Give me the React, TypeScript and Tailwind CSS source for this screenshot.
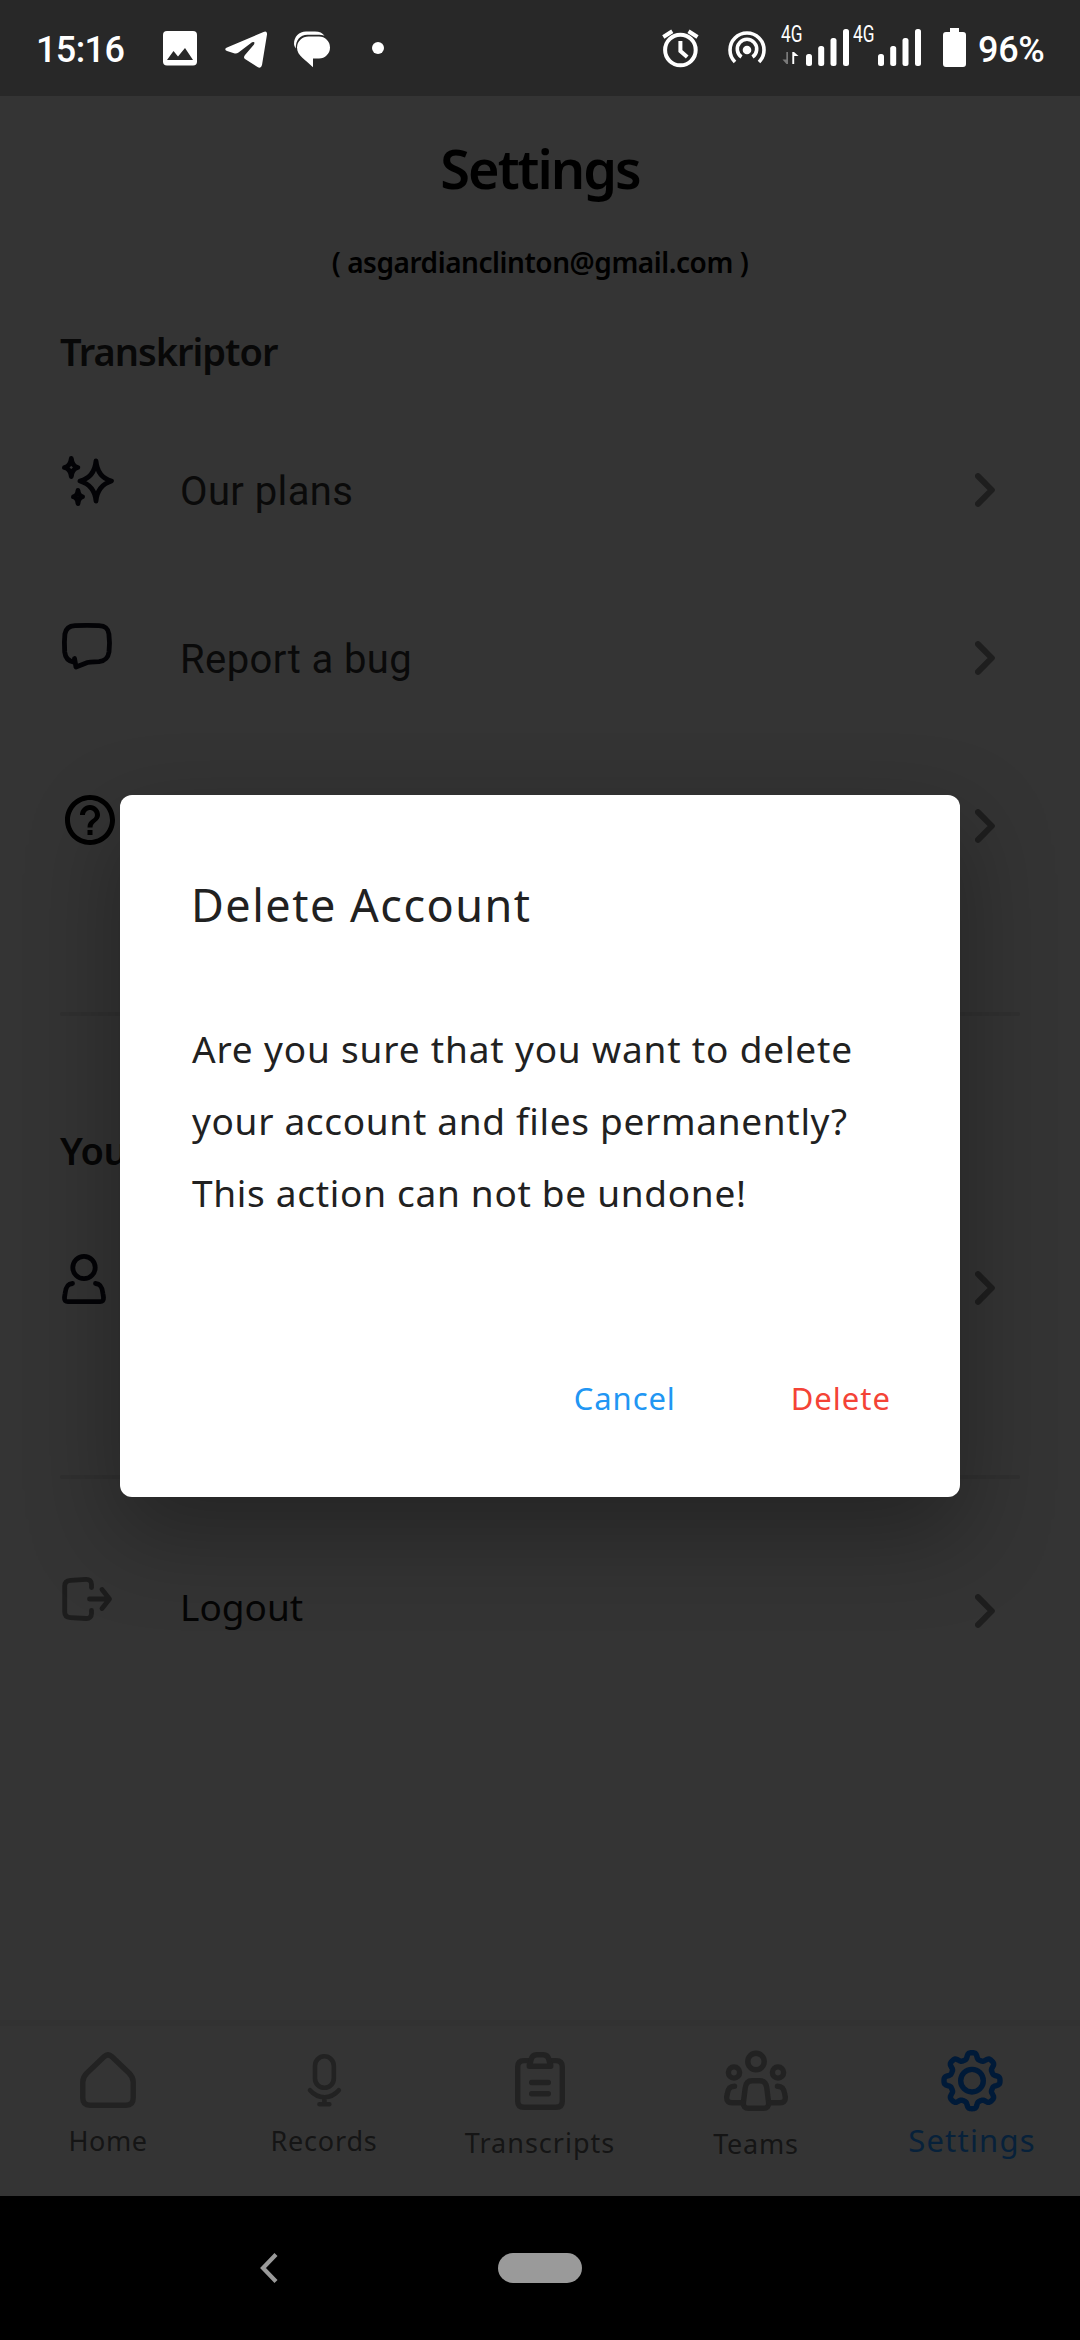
import type { ReactNode } from 'react';

/* ---------- Status bar ---------- */

function Signal() {
  return (
    <svg className="h-24 w-[43px]" viewBox="0 0 43 96" fill="#fff">
      <rect x="0" y="54" width="6" height="12" rx="2.5" />
      <rect x="12.2" y="46" width="6" height="20" rx="2.5" />
      <rect x="24.5" y="38" width="6" height="28" rx="2.5" />
      <rect x="37" y="29" width="6" height="37" rx="2.5" />
    </svg>
  );
}

function StatusBar() {
  return (
    <header className="flex h-24 w-full shrink-0 bg-[#282828] pl-9 font-['Roboto',sans-serif] text-white">
      <div className="w-[127px] text-[36px] font-medium leading-[100px] tracking-[-0.6px]">15:16</div>
      <svg className="h-24 w-[34px]" viewBox="0 0 34 96">
        <rect y="31" width="34" height="34.5" rx="4" fill="#fff" />
        <path d="M4 60L10.5 51L15 56.5L22 48L30 60Z" fill="#282828" />
      </svg>
      <svg className="ml-7 h-24 w-[42px]" viewBox="0 0 42 96" fill="#fff">
        <path d="M2 47.5L38.500 32Q42.300 30.500 42 34.500L37 65Q36 69 32.500 67L20 59Q18 57.500 20 55L29 44.500Q30.500 41 27 42.200L13.500 52.500Q11.500 54 9 53.300L2 51Q-1.500 49 2 47.500Z" />
      </svg>
      <svg className="ml-[27px] h-24 w-9" viewBox="0 0 36 96" fill="#fff">
        <path d="M14.500 36.500H25A11 11 0 0 1 25 58.500H19V67.200C12 60 3 56 3 47.500A11.500 11 0 0 1 14.500 36.500Z" />
        <path d="M0 44C0 36.500 5 31.500 12 31.500H21C25.500 31.500 28.500 33 30.500 35.700C28.500 34.800 26 34.700 24 34.700H13.500C6 34.700 1.600 40 1.800 48.500Q0 46 0 44Z" />
      </svg>
      <svg className="ml-[42px] h-24 w-3" viewBox="0 0 12 96" fill="#fff">
        <circle cx="6" cy="48" r="6" />
      </svg>
      <svg className="ml-[278px] h-24 w-[37px]" viewBox="0 0 37 96" fill="none" stroke="#fff" strokeWidth="4">
        <circle cx="18.400" cy="50" r="15.300" />
        <path d="M1.300 37L10.300 31.200M35.500 37L26.500 31.200" />
        <path d="M18.400 41V51L25.200 57" />
      </svg>
      <svg className="ml-[29px] h-24 w-[38px]" viewBox="0 0 38 96" fill="none" stroke="#fff" strokeWidth="3.600">
        <circle cx="19" cy="50" r="4.300" fill="#fff" stroke="none" />
        <path d="M13.500 57A9.700 9.700 0 1 1 24.500 57" />
        <path d="M7 62A17 17 0 1 1 31 62" />
      </svg>
      <div className="ml-[15px] flex w-6 flex-col pt-6">
        <span className="h-[22px] origin-left scale-x-75 text-[23px] leading-[22px]">4G</span>
        <svg className="mt-[5px] h-[14px] w-5" viewBox="0 0 20 14">
          <path d="M7 1V13H5.500L1.500 8.500H5.300V1Z" fill="#7a7a7a" />
          <path d="M11.300 13V1H13L17.500 5H13.200V13Z" fill="#fff" />
        </svg>
      </div>
      <div className="ml-px flex"><Signal /></div>
      <div className="ml-1 w-[25px] pt-6">
        <span className="block h-[22px] w-8 origin-left scale-x-75 text-[23px] leading-[22px]">4G</span>
      </div>
      <Signal />
      <svg className="ml-[22px] h-24 w-[23px]" viewBox="0 0 23 96" fill="#fff">
        <path d="M7 28H16V32H20Q23 32 23 35V64Q23 67 20 67H3Q0 67 0 64V35Q0 32 3 32H7Z" />
      </svg>
      <div className="ml-[12px] text-[36px] font-medium leading-[100px] tracking-[-0.3px]">96%</div>
    </header>
  );
}

/* ---------- Settings list ---------- */

function RowIcon({ children, color = '#030306' }: { children: ReactNode; color?: string }) {
  return (
    <svg className="h-16 w-16 overflow-visible" viewBox="0 0 64 64" fill="none" stroke={color} strokeWidth="4.800" strokeLinecap="round" strokeLinejoin="round">
      {children}
    </svg>
  );
}

function Row({ icon, children }: { icon: ReactNode; children?: ReactNode }) {
  return (
    <div className="flex h-[168px] items-center pl-[60px] pr-[85px]">
      <div className="w-[120px]">{icon}</div>
      <div className="flex-1">{children}</div>
      <svg className="h-[34px] w-5" viewBox="0 0 20 34" fill="none" stroke="#1e1e1e" strokeWidth="6" strokeLinecap="round" strokeLinejoin="round">
        <path d="M3 3.200L16.800 17L3 30.800" />
      </svg>
    </div>
  );
}

const Sparkles = () => (
  <RowIcon>
    <path d="M36 3C37 13.500 42 20.500 51.500 23C42 26 37 32.500 36 43C35 32.500 30 26 20 23C30 20.500 35 13.500 36 3Z" />
    <path d="M11.300 0.500C11.800 5 13.500 8.500 17.800 9.500C13.500 10.500 11.800 14 11.300 18.500C10.800 14 9 10.500 4.500 9.500C9 8.500 10.800 5 11.300 .500Z" />
    <path d="M18 32.500C18.400 36 19.500 38 22.500 38.800C19.500 39.600 18.400 41.600 18 45.500C17.600 41.600 16.500 39.600 13.500 38.800C16.500 38 17.600 36 18 32.500Z" />
  </RowIcon>
);

const ChatBubble = () => (
  <RowIcon>
    <path d="M14.500 32.500V36.300C8 35.500 5.300 32 4.700 26C4.200 19 4.200 14 4.900 8C5.800 2.500 9 0 15 -.300C22 -.700 32 -.700 39 -.300C45 0 48 2 48.900 8C49.700 14 49.700 20 49 26C48 32.500 45 35 39 35.700C34 36 31 35.600 27.500 36.500L16 41Z" />
  </RowIcon>
);

const Help = () => (
  <RowIcon>
    <path
      transform="translate(0 -4) scale(2.500)"
      fill="#000"
      stroke="none"
      d="M11 18h2v-2h-2v2zm1-16C6.480 2 2 6.480 2 12s4.480 10 10 10 10-4.480 10-10S17.520 2 12 2zm0 18c-4.410 0-8-3.590-8-8s3.590-8 8-8 8 3.590 8 8-3.590 8-8 8zm0-14c-2.210 0-4 1.790-4 4h2c0-1.100.9-2 2-2s2 .9 2 2c0 2-3 1.750-3 5h2c0-2.250 3-2.500 3-5 0-2.210-1.790-4-4-4z"
    />
  </RowIcon>
);

const Person = () => (
  <RowIcon>
    <circle cx="24" cy="11.500" r="11.200" />
    <path d="M12.500 27.500C7 27.800 5.600 32 5 38L4.500 41.500C4.300 44.500 5.500 45.700 8 45.700H40C42.500 45.700 43.700 44.500 43.500 41.500L43 38C42.400 32 41 27.800 35.500 27.500" />
  </RowIcon>
);

const Exit = () => (
  <RowIcon color="#1d1d1d">
    <path d="M31.500 8.500V5.500C31.500 2 29.500 .3 26 .4L10.500 1.300C6.500 1.600 4.700 3.500 4.700 7V33C4.700 36.500 6.500 38.300 10.500 38.600L26 39.500C29.500 39.700 31.500 37.800 31.500 34.500V31.500" />
    <path d="M29.500 20H49.300M42 10.500L49.500 20L42 29.500" />
  </RowIcon>
);

const Divider = () => <div className="mx-[60px] h-1 shrink-0 rounded-full bg-[#303030]" />;

/* ---------- Bottom navigation ---------- */

function NavIcon({ children, color = '#222222' }: { children: ReactNode; color?: string }) {
  return (
    <svg className="h-16 w-16 overflow-visible" viewBox="0 0 64 64" fill="none" stroke={color} strokeWidth="5.400" strokeLinecap="round" strokeLinejoin="round">
      {children}
    </svg>
  );
}

const GEAR = Array.from({ length: 160 }, (_, i) => {
  const a = (i / 160) * Math.PI * 2;
  const r = 24.9 + 3.100 * (Math.tanh(2 * Math.cos(8 * a)) / Math.tanh(2));
  return `${(32 + r * Math.cos(a)).toFixed(2)},${(32.7 + r * Math.sin(a)).toFixed(2)}`;
}).join(' ');

function NavItem({ icon, children }: { icon: ReactNode; children: ReactNode }) {
  return (
    <div className="flex w-[216px] flex-col items-center">
      {icon}
      {children}
    </div>
  );
}

function BottomNav() {
  return (
    <nav className="flex h-[176px] shrink-0 border-t-[6px] border-[#323232] pt-[22px] text-[27px] font-[380] leading-10 text-[#151515]">
      <NavItem
        icon={
          <NavIcon>
            <path d="M28 8.800Q32 5 36 8.800L53 25Q57.200 29 57.200 34V50Q57.200 57.200 50 57.200H14Q6.800 57.200 6.800 50V34Q6.800 29 11 25Z" />
          </NavIcon>
        }
      >
        <span className="mt-[9px] tracking-[0.500px]">Home</span>
      </NavItem>
      <NavItem
        icon={
          <NavIcon>
            <g strokeWidth="4.600">
              <rect x="23" y="8.300" width="18.800" height="31.500" rx="9.400" />
              <path d="M18 42.300C26 51.500 39 51.500 46.800 42.300M32.400 49.500V56M27.500 56.200H37.300" />
            </g>
          </NavIcon>
        }
      >
        <span className="mt-[9px] tracking-[0.8px]">Records</span>
      </NavItem>
      <NavItem
        icon={
          <NavIcon>
            <path d="M20 12.600H16Q9.700 12.600 9.700 19V53Q9.700 59.300 16 59.300H48Q54.300 59.300 54.300 53V19Q54.300 12.600 48 12.600H44" />
            <path d="M21.300 18.300H42.700V16.500C41.200 15.500 41.200 14 41 12Q40 6.700 35 6.700H29Q24 6.700 23 12C22.800 14 22.800 15.500 21.300 16.500Z" />
            <path d="M23.700 34.500H40.300M23.700 45.800H40.300" />
          </NavIcon>
        }
      >
        <span className="mt-[11px] tracking-[1px]">Transcripts</span>
      </NavItem>
      <NavItem
        icon={
          <NavIcon>
            <circle cx="32" cy="13.500" r="8.200" />
            <circle cx="10" cy="24.500" r="5.600" />
            <circle cx="54" cy="24.500" r="5.600" />
            <path d="M28 32.800H36C40 32.800 42.200 35 42.800 40L44.600 54.500C45 58.500 43 60.300 39.500 60.300H24.500C21 60.300 19 58.500 19.400 54.500L21.200 40C21.800 35 24 32.800 28 32.800Z" />
            <path d="M10.500 38.300C6 38.300 4 40.500 3.300 46L2.700 49C2.500 53.500 4.500 54.700 8 54.700H19M53.500 38.300C58 38.300 60 40.500 60.700 46L61.300 49C61.500 53.500 59.500 54.700 56 54.700H45" />
          </NavIcon>
        }
      >
        <span className="mt-[12px] tracking-[0.8px]">Teams</span>
      </NavItem>
      <NavItem
        icon={
          <NavIcon color="#001a38">
            <polygon points={GEAR} />
            <circle cx="32" cy="32.700" r="11.300" />
          </NavIcon>
        }
      >
        <span className="mt-[8px] text-[31px] font-normal tracking-[1.200px] text-[#07213a]">Settings</span>
      </NavItem>
    </nav>
  );
}

/* ---------- Dialog ---------- */

function DeleteDialog() {
  return (
    <section
      role="dialog"
      className="absolute left-[120px] top-[795px] flex h-[702px] w-[840px] flex-col rounded-[12px] bg-white pl-[72px] pr-[69px] pt-[80px] text-[#212121] shadow-[0_36px_90px_4px_rgba(0,0,0,0.3)]"
    >
      <h2 className="-ml-px text-[45px] font-[370] leading-[60px] tracking-[1.500px]">Delete Account</h2>
      <div className="mt-[78px] whitespace-nowrap text-[37px] font-[380] leading-[72px]">
        <p className="tracking-[0.830px]">Are you sure that you want to delete</p>
        <p className="tracking-[0.680px]">your account and files permanently?</p>
        <p className="tracking-[0.700px]">This action can not be undone!</p>
      </div>
      <div className="mt-[145px] flex justify-end gap-[115px] text-[31px] leading-[48px]">
        <button className="tracking-[0.900px] text-[#2196f3]">Cancel</button>
        <button className="tracking-[1.000px] text-[#f44336]">Delete</button>
      </div>
    </section>
  );
}

export default function App() {
  return (
    <div className="relative flex h-[2340px] w-[1080px] flex-col overflow-hidden bg-[#343434] font-['Noto_Sans',sans-serif]">
      <StatusBar />
      <main className="flex flex-1 flex-col">
        <h1 className="mt-[36px] text-center text-[54px] font-semibold leading-[72px] tracking-[-2px] text-black">Settings</h1>
        <p className="mt-9 text-center text-[28px] font-semibold leading-[44px] tracking-[-0.450px] text-black">( asgardianclinton@gmail.com )</p>
        <h2 className="mt-[39px] pl-[60px] text-[38px] font-semibold leading-[56px] tracking-[-1px] text-[#080808]">Transkriptor</h2>
        <div className="mt-[27px] font-['Roboto',sans-serif] text-[40px] tracking-[0.400px] text-[#0a0a0a]">
          <Row icon={<Sparkles />}><span className="block pt-[3px]">Our plans</span></Row>
          <Row icon={<ChatBubble />}><span className="block pt-[3px]">Report a bug</span></Row>
          <Row icon={<Help />} />
        </div>
        <div className="h-[102px]" />
        <Divider />
        <h2 className="mt-[106px] pl-[60px] text-[38px] font-semibold leading-[56px] tracking-[-0.500px] text-[#060606]">You</h2>
        <div className="mt-[26px]">
          <Row icon={<Person />} />
        </div>
        <div className="h-[103px]" />
        <Divider />
        <div className="mt-12 text-[37px] text-[#050505]">
          <Row icon={<Exit />}>
            <span className="block pb-[8px]">Logout</span>
          </Row>
        </div>
      </main>
      <BottomNav />
      <footer className="flex h-36 shrink-0 items-center bg-black pl-[260px]">
        <svg className="h-[30px] w-[18px]" viewBox="0 0 18 30" fill="none" stroke="#9a9a9a" strokeWidth="4.200">
          <path d="M16 1.500L3 15L16 28.500" />
        </svg>
        <div className="ml-[220px] h-[30px] w-[84px] rounded-full bg-[#9a9a9a]" />
      </footer>
      <DeleteDialog />
    </div>
  );
}
